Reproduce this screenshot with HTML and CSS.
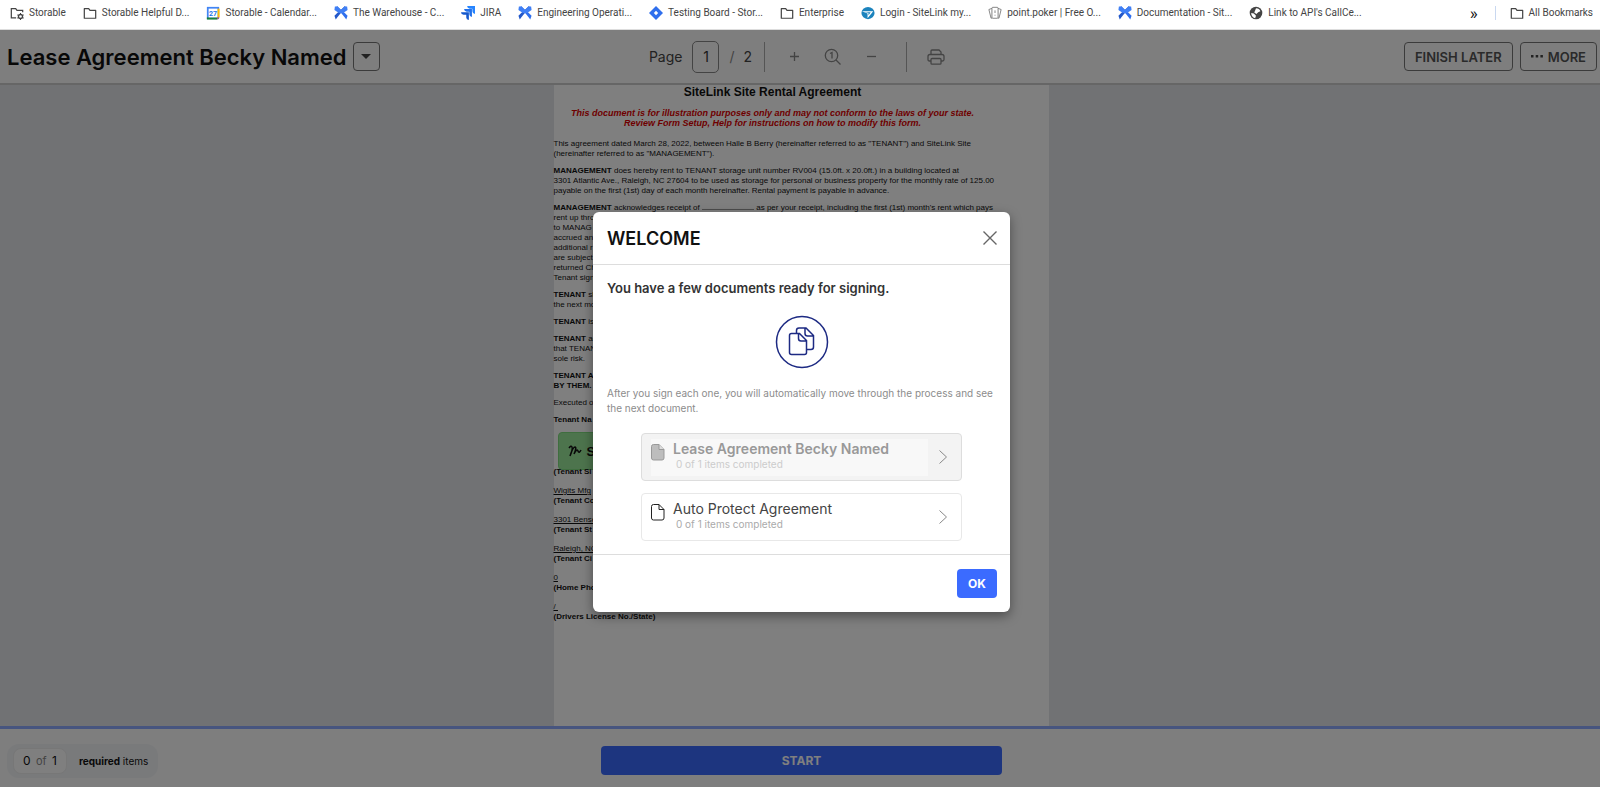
FILE: index.html
```html
<!doctype html>
<html lang="en">
<head>
    <meta charset="UTF-8">
    <meta name="viewport" content="width=device-width, initial-scale=1.0">
    <title>Lease Agreement Becky Named</title>
    <link rel="stylesheet" href="styles.css">
</head>
<body>
<svg class="defs" aria-hidden="true">
    <symbol id="folder" viewBox="0 0 16 16">
        <path d="M1.5 3h5l1.5 2h6.5v9h-13z" fill="none" stroke="#444" stroke-width="1.4" stroke-linejoin="round"/>
    </symbol>
    <symbol id="confluence" viewBox="0 0 16 16">
        <path d="M3.500 0l-2.500 4q5 2 7 4t6 7.500l1.500-4.500q-3-3-5.500-5t-6.500-6z" fill="#2f6fed"/>
        <path d="M12.500 0l2.500 4q-5 2-7 4t-6 7.500l-1.500-4.500q3-3 5.500-5t6.500-6z" fill="#2458c9"/>
        <path d="M1 .5h3l4 4 4-4h3l.5 4-5 3.500-5 0-5-3.500z" fill="#3f7ff5"/>
    </symbol>
    <symbol id="chevron" viewBox="0 0 8 14">
        <path d="M.5.5l7 6.500-7 6.500" fill="none" stroke="#888" stroke-width="1"/>
    </symbol>
</svg>
<nav class="bookmarks">
    <a href="#"><svg viewBox="0 0 16 16"><path d="M7 13.500h-5.500v-10.500h5l1.500 2h6.500v2" fill="none" stroke="#444" stroke-width="1.400"/><circle cx="12" cy="12" r="2.300" fill="none" stroke="#444" stroke-width="1.500"/><path d="M12 8v1.500M12 14.500v1.500M8.500 10l1.300.8M14.200 13.200l1.300.8M8.500 14l1.300-.8M14.200 10.800l1.300-.8" stroke="#444" stroke-width="1.200"/></svg>Storable</a>
    <a href="#"><svg><use href="#folder"/></svg>Storable Helpful D...</a>
    <a href="#"><svg viewBox="0 0 16 16"><path d="M1 1h14v14h-14z" fill="#4285f4"/><path d="M13 3h2.500v10h-2.500z" fill="#fbbc04"/><path d="M1 13h12v2.500h-12z" fill="#188038"/><path d="M13 13h2.500l-2.500 2.500z" fill="#ea4335"/><path d="M3 3h10v10h-10z" fill="#fff"/><text x="8" y="11" text-anchor="middle" class="cal-day">27</text></svg>Storable - Calendar...</a>
    <a href="#"><svg><use href="#confluence"/></svg>The Warehouse - C...</a>
    <a href="#"><svg viewBox="0 0 16 16"><path d="M7 0h9v9q-3-.5-3-3v-3h-3q-3-.5-3-3z" fill="#2684ff"/><path d="M3.500 3.500h9v9q-3-.5-3-3v-3h-3q-3-.5-3-3z" fill="#2371ea"/><path d="M0 7h9v9q-3-.5-3-3v-3h-3q-3-.5-3-3z" fill="#1558cc"/></svg>JIRA</a>
    <a href="#"><svg><use href="#confluence"/></svg>Engineering Operati...</a>
    <a href="#"><svg viewBox="0 0 16 16"><path d="M8 0l8 8-8 8-8-8z" fill="#2f6fed"/><path d="M8 5.500l2.500 2.500-2.500 2.500-2.500-2.500z" fill="#fff"/></svg>Testing Board - Stor...</a>
    <a href="#"><svg><use href="#folder"/></svg>Enterprise</a>
    <a href="#"><svg viewBox="0 0 16 16"><ellipse cx="8" cy="8" rx="7.500" ry="7" fill="#1b83bd"/><path d="M1 6h13l-6.500 8v-5.500z" fill="#fff"/><path d="M4 7h7l-2.500 3.500v-2.500z" fill="#1b83bd"/></svg>Login - SiteLink my...</a>
    <a href="#"><svg viewBox="0 0 16 16" fill="#fff" stroke="#777"><path d="M1 4l4-1.500v11l-1.500.5zM15 4l-4-1.500v11l1.500.5z"/><rect x="4.500" y="1.500" width="7" height="12.500" rx="1"/><path d="M8 5v3M8 10v1"/></svg>point.poker | Free O...</a>
    <a href="#"><svg><use href="#confluence"/></svg>Documentation - Sit...</a>
    <a href="#"><svg viewBox="0 0 16 16"><circle cx="8" cy="8" r="7.200" fill="#444"/><path d="M8 2.500q4 0 5 3.500l-2.500 1-2 2-2.500-1.500 1-2.500zM2.500 8l3 .5 2.500 2.500-1 3q-4.500-1.500-4.500-6z" fill="#fff"/></svg>Link to API's CallCe...</a>
    <button class="overflow" type="button" aria-label="More bookmarks">»</button>
    <a class="all" href="#"><svg><use href="#folder"/></svg>All Bookmarks</a>
</nav>
<div class="app">
    <header class="toolbar">
        <div class="doc-name">
            <h1>Lease Agreement Becky Named</h1>
            <button class="btn caret" type="button" aria-label="Choose document"><svg width="10" height="5" viewBox="0 0 10 5"><path d="M0 0h10l-5 5z"/></svg></button>
        </div>
        <div class="tools">
            <label for="page">Page</label>
            <input id="page" type="text" value="1">
            <span class="slash">/</span>
            <span class="total">2</span>
            <div class="zooms">
                <button type="button" aria-label="Zoom in"><svg width="9" height="9" viewBox="0 0 9 9"><path d="M4.500 0v9M0 4.500h9"/></svg></button>
                <button type="button" aria-label="Actual size"><svg width="18" height="18" viewBox="0 0 18 18"><circle cx="7.500" cy="7.500" r="6.200"/><path d="M12 12l4.500 4.500M6 5.500l2-1v6"/></svg></button>
                <button type="button" aria-label="Zoom out"><svg width="9" height="9" viewBox="0 0 9 9"><path d="M0 4.500h9"/></svg></button>
            </div>
            <button type="button" aria-label="Print"><svg width="18" height="16" viewBox="0 0 18 16"><path d="M4 5.500v-3.500q0-1 1-1h7l2 2v2.500M4 12h-1.500q-1.500 0-1.500-1.500v-3q0-2 2-2h12q2 0 2 2v3q0 1.500-1.500 1.500h-1.500"/><rect x="4" y="9.500" width="10" height="5.700" rx="1"/></svg></button>
        </div>
        <div class="actions">
            <button class="btn" type="button">FINISH LATER</button>
            <button class="btn" type="button"><svg width="12" height="3" viewBox="0 0 12 3"><path d="M0 0h2.500v2.500h-2.500zM4.700 0h2.500v2.500h-2.500zM9.400 0h2.500v2.500h-2.500z"/></svg>MORE</button>
        </div>
    </header>
    <main class="viewer">
        <article class="page">
            <h2>SiteLink Site Rental Agreement</h2>
            <p class="warning">This document is for illustration purposes only and may not conform to the laws of your state.<br>Review Form Setup, Help for instructions on how to modify this form.</p>
            <p>This agreement dated March 28, 2022, between Halle B Berry (hereinafter referred to as "TENANT") and SiteLink Site<br>(hereinafter referred to as "MANAGEMENT").</p>
            <p><b>MANAGEMENT</b> does hereby rent to TENANT storage unit number RV004 (15.0ft. x 20.0ft.) in a building located at<br>3301 Atlantic Ave., Raleigh, NC 27604 to be used as storage for personal or business property for the monthly rate of 125.00<br>payable on the first (1st) day of each month hereinafter. Rental payment is payable in advance.</p>
            <p><b>MANAGEMENT</b> acknowledges receipt of <span class="blank"></span> as per your receipt, including the first (1st) month's rent which pays<br>rent up thro<br>to MANAG<br>accrued an<br>additional r<br>are subject<br>returned Ch<br>Tenant sign</p>
            <p><b>TENANT</b> sh<br>the next mo</p>
            <p><b>TENANT</b> is</p>
            <p><b>TENANT</b> ac<br>that TENAN<br>sole risk.</p>
            <p><b>TENANT A<br>BY THEM.</b></p>
            <p>Executed o</p>
            <p><b>Tenant Na</b></p>
            <button class="sign" type="button"><svg width="14" height="14" viewBox="0 0 14 14"><path d="M1 4q2-3 3-1t-2 9q3-9 5-9t-1 7q3-6 4-3t3-1"/></svg>S</button>
            <p class="field"><b>(Tenant Si</b></p>
            <p class="field"><u>Wigits Mfg</u><br><b>(Tenant Co</b></p>
            <p class="field"><u>3301 Bense</u><br><b>(Tenant St</b></p>
            <p class="field"><u>Raleigh, NC</u><br><b>(Tenant Ci</b></p>
            <p class="field"><u>0</u><br><b>(Home Pho</b></p>
            <p class="field"><u>/&nbsp;</u><br><b>(Drivers License No./State)</b></p>
        </article>
    </main>
    <footer class="bottom">
        <div class="progress"><span class="count">0 <i>of</i> 1</span><span><b>required</b> items</span></div>
        <button class="start" type="button">START</button>
    </footer>
    <div class="overlay">
        <section class="modal" role="dialog" aria-labelledby="welcome">
            <header>
                <h2 id="welcome">WELCOME</h2>
                <button class="close" type="button" aria-label="Close"><svg width="14" height="14" viewBox="0 0 14 14"><path d="M.5.5l13 13M13.500.5l-13 13"/></svg></button>
            </header>
            <div class="modal-body">
                <h3>You have a few documents ready for signing.</h3>
                <svg class="docs" width="54" height="54" viewBox="0 0 54 54"><circle cx="27" cy="27" r="25.500"/><path d="M16.500 18.500h8l7 7v12q0 2-2 2h-13q-2 0-2-2v-17q0-2 2-2zM23.500 18.500v5q0 2.500 2.500 2.500h5.500M21.500 18.500v-3q0-2.500 2.500-2.500h7l7.500 7.500v11.500q0 2.500-2.500 2.500h-4.500M30 13v5.500q0 2.500 2.500 2.500h6"/></svg>
                <p>After you sign each one, you will automatically move through the process and see the next document.</p>
                <button class="card current" type="button">
                    <span class="info">
                        <svg width="14" height="17" viewBox="0 0 14 17"><path d="M2.500.5h5.500l5 5v8.500q0 2-2 2h-8.500q-2 0-2-2v-11.500q0-2 2-2z" fill="#bdbdbd" stroke="#999"/><path d="M8 .5v5h5" fill="#ddd" stroke="#999"/></svg>
                        <span><strong>Lease Agreement Becky Named</strong><small>0 of 1 items completed</small></span>
                    </span>
                    <svg width="8" height="14"><use href="#chevron"/></svg>
                </button>
                <button class="card" type="button">
                    <span class="info">
                        <svg width="14" height="17" viewBox="0 0 14 17"><path d="M2.500.5h5.500l5 5v8.500q0 2-2 2h-8.500q-2 0-2-2v-11.500q0-2 2-2zM8 .5v5h5" fill="none" stroke="#222"/></svg>
                        <span><strong>Auto Protect Agreement</strong><small>0 of 1 items completed</small></span>
                    </span>
                    <svg width="8" height="14"><use href="#chevron"/></svg>
                </button>
            </div>
            <footer><button class="ok" type="button">OK</button></footer>
        </section>
    </div>
</div>
</body>
</html>
```
FILE: styles.css
```css
* {
    box-sizing: border-box;
    margin: 0;
    padding: 0;
}

body {
    display: flex;
    flex-direction: column;
    height: 100vh;
    overflow: hidden;
    font-family: Inter, sans-serif;
    color: #111;
}

button {
    background: none;
    border: 0;
    font-family: inherit;
    color: inherit;
}

.defs {
    display: none;
}

/* browser bookmarks bar */
.bookmarks {
    flex: none;
    display: flex;
    align-items: center;
    gap: 17px;
    height: 30px;
    padding: 0 7px 4px 10px;
    border-bottom: 1px solid #ddd;
    background: #fff;
    font-family: Roboto, sans-serif;
    font-size: 10px;
    white-space: nowrap;
}

.bookmarks a {
    display: flex;
    align-items: center;
    gap: 5px;
    color: #444;
    text-decoration: none;
}

.bookmarks svg {
    width: 14px;
    height: 14px;
}

.cal-day {
    font-size: 8px;
    font-weight: bold;
    fill: #1a73e8;
}

.overflow {
    margin-left: auto;
    font-size: 17px;
    line-height: 20px;
}

.bookmarks .all {
    padding-left: 14px;
    border-left: 1px solid #c9d8f0;
}

.app {
    flex: 1;
    min-height: 0;
    position: relative;
    display: flex;
    flex-direction: column;
}

/* top toolbar */
.toolbar {
    flex: none;
    display: grid;
    grid-template-columns: 1fr auto 1fr;
    align-items: center;
    height: 55px;
    padding: 0 3px 0 7px;
    border-bottom: 2px solid #ccc;
    background: #fdfdfd;
}

.doc-name,
.tools,
.zooms,
.actions {
    display: flex;
    align-items: center;
}

.doc-name {
    gap: 6px;
}

h1 {
    font-size: 22px;
    font-weight: 600;
    line-height: 28px;
    white-space: nowrap;
}

.btn {
    display: flex;
    align-items: center;
    justify-content: center;
    gap: 5px;
    height: 29px;
    padding: 0 10px;
    border: 1px solid #777;
    border-radius: 4px;
    color: #555;
    font-size: 13px;
    font-weight: 600;
}

.btn svg {
    fill: #444;
}

.caret {
    width: 27px;
    padding: 0;
}

.actions {
    justify-content: flex-end;
    gap: 7px;
}

.tools {
    padding-right: 10px;
    font-size: 14px;
    color: #444;
}

.tools input {
    width: 27px;
    height: 32px;
    margin: 0 10px;
    border: 1px solid #888;
    border-radius: 5px;
    background: none;
    color: #333;
    font: 14px Inter, sans-serif;
    text-align: center;
}

.slash {
    color: #888;
}

.total {
    margin: 0 12px 0 9px;
}

.tools svg {
    display: block;
    fill: none;
    stroke: #888;
    stroke-width: 1.3;
}

.zooms {
    gap: 25px;
    height: 30px;
    margin-right: 20px;
    padding: 0 30px 0 25px;
    border: 1px solid #aaa;
    border-width: 0 1px;
}

/* document */
.viewer {
    flex: 1;
    min-height: 0;
    overflow: hidden;
    padding-left: 2px;
    background: #e2e5e9;
}

.page {
    width: 495px;
    min-height: 100%;
    margin: 0 auto;
    background: #fff;
    font-family: "Liberation Sans", sans-serif;
    font-size: 8px;
    line-height: 10px;
    white-space: nowrap;
}

.page h2 {
    width: 438px;
    margin-bottom: 9px;
    font-size: 12px;
    line-height: 14px;
    text-align: center;
}

.page p {
    margin-bottom: 7px;
}

.page .warning {
    width: 438px;
    margin-bottom: 11px;
    color: #d00;
    font-size: 9px;
    font-style: italic;
    font-weight: bold;
    text-align: center;
}

.blank {
    display: inline-block;
    width: 52px;
    border-bottom: 1px solid #999;
}

.page .sign {
    display: flex;
    align-items: center;
    gap: 5px;
    width: 130px;
    height: 38px;
    margin: 0 0 -3px 4px;
    padding-left: 9px;
    border: 1px solid #7fdc7f;
    border-radius: 4px;
    background: #9be89b;
    font-size: 13px;
    font-weight: 600;
}

.sign svg {
    fill: none;
    stroke: #111;
    stroke-width: 1.5;
}

.page .field {
    margin-bottom: 9px;
}

/* bottom bar */
.bottom {
    flex: none;
    display: grid;
    grid-template-columns: 1fr 401px 1fr;
    align-items: center;
    height: 61px;
    padding: 5px 4px 0 7px;
    border-top: 3px solid #8faaff;
    background: #fcfcfc;
}

.progress {
    justify-self: start;
    display: flex;
    align-items: center;
    gap: 12px;
    height: 34px;
    padding: 0 10px 0 6px;
    border-radius: 12px;
    background: #f2f4f7;
    font-size: 10px;
}

.count {
    padding: 0 9px;
    border: 1px solid #eee;
    border-radius: 8px;
    background: #fff;
    font-size: 12px;
    line-height: 23px;
}

.count i {
    margin: 0 2px;
    color: #888;
    font-size: 11px;
    font-style: normal;
}

.start,
.ok {
    height: 29px;
    border-radius: 4px;
    background: #3b6bff;
    color: #fff;
    font-size: 12px;
    font-weight: 700;
}

/* welcome dialog */
.overlay {
    position: absolute;
    inset: 0;
    display: flex;
    align-items: flex-start;
    justify-content: center;
    padding: 182px 0 0 3px;
    background: rgba(0, 0, 0, .5);
}

.modal {
    width: 417px;
    border-radius: 6px;
    background: #fff;
    box-shadow: 0 4px 12px rgba(0, 0, 0, .4);
}

.modal header {
    display: flex;
    align-items: center;
    justify-content: space-between;
    height: 53px;
    padding: 0 13px 0 14px;
    border-bottom: 1px solid #ddd;
}

.modal h2 {
    font-size: 18px;
    font-weight: 600;
}

.close svg {
    display: block;
    stroke: #666;
    stroke-width: 1.4;
}

.modal-body {
    padding: 13px 14px;
}

.modal h3 {
    color: #333;
    font-size: 13px;
    font-weight: 600;
    line-height: 20px;
}

.docs {
    display: block;
    margin: 17px auto;
    fill: none;
    stroke: #1d2a83;
    stroke-width: 1.5;
}

.modal p {
    margin-bottom: 17px;
    color: #8c8c8c;
    font-size: 10px;
    line-height: 15px;
}

.card {
    display: flex;
    align-items: center;
    justify-content: space-between;
    width: 321px;
    height: 48px;
    margin: 0 auto;
    padding: 4px 14px 4px 9px;
    border: 1px solid #e8e8e8;
    border-radius: 4px;
    text-align: left;
}

.card + .card {
    margin-top: 12px;
}

.info {
    display: flex;
    gap: 8px;
    width: 277px;
    height: 37px;
}

.info > svg {
    margin-top: 5px;
}

.card strong,
.card small {
    display: block;
}

.card strong {
    color: #444;
    font-size: 14px;
    font-weight: 400;
    line-height: 19px;
}

.card small {
    padding-left: 3px;
    color: #aaa;
    font-size: 10px;
    line-height: 12px;
}

.current {
    border-color: #ddd;
    background: #f3f3f3;
}

.current .info {
    background: #f8f8f8;
}

.current strong {
    color: #999;
    font-weight: 600;
}

.current small {
    color: #ccc;
}

.modal footer {
    display: flex;
    justify-content: flex-end;
    padding: 14px 13px;
    border-top: 1px solid #ddd;
}

.ok {
    width: 40px;
}
```
